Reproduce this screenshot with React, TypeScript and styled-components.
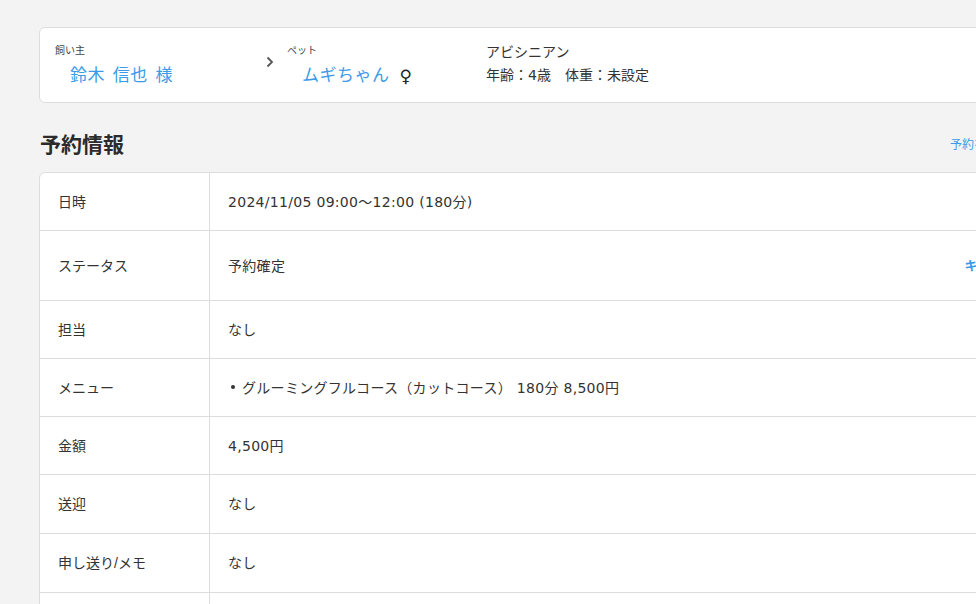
import React from "react";
import styled, { createGlobalStyle } from "styled-components";

const Blue = "#3b9be8";
const Line = "#dddddd";

const GlobalStyle = createGlobalStyle`
  html, body {
    margin: 0;
    padding: 0;
    background: #f3f3f3;
    overflow: hidden;
  }
  body {
    font-family: "Liberation Sans", "Noto Sans CJK JP", sans-serif;
    color: #333;
  }
`;

const Page = styled.div`
  width: 1011px;
  padding: 27px 0 0 39px;
`;

const HeaderCard = styled.div`
  display: flex;
  align-items: center;
  height: 76px;
  box-sizing: border-box;
  padding: 0 15px;
  background: #fff;
  border: 1px solid ${Line};
  border-radius: 6px;
`;

const PersonBlock = styled.div<{ $width: number }>`
  display: flex;
  flex-direction: column;
  width: ${(p) => p.$width}px;
  margin-top: 1px;
`;

const SmallLabel = styled.div`
  font-size: 10px;
  line-height: 14px;
  color: #444;
`;

const Name = styled.div`
  display: flex;
  align-items: center;
  gap: 10px;
  padding-left: 15px;
  margin-top: 6px;
  font-size: 17px;
  line-height: 24px;
  color: ${Blue};
  letter-spacing: 0.5px;
  word-spacing: 2.5px;
`;

const Gender = styled.span`
  color: #222;
  font-family: "DejaVu Sans", sans-serif;
  font-size: 17px;
`;

const Chevron = styled.div`
  display: flex;
  width: 10px;
  margin: 0 12px 6px 0;
  color: #555;
`;

const Profile = styled.div`
  display: flex;
  flex-direction: column;
  gap: 5px;
  font-family: "DejaVu Sans", "Noto Sans CJK JP", sans-serif;
  font-size: 14px;
  line-height: 18px;
  color: #333;
  margin-top: -4px;
`;

const SectionHead = styled.div`
  display: flex;
  align-items: center;
  justify-content: space-between;
  margin: 26px 0 15px 1px;
`;

const Title = styled.h2`
  margin: 0;
  font-size: 21px;
  line-height: 28px;
  font-weight: 700;
  color: #2b2b2b;
  font-family: "Noto Sans CJK JP", sans-serif;
`;

const HeadLink = styled.a`
  font-size: 12px;
  color: ${Blue};
  margin-right: 40px;
  text-decoration: none;
`;

const Table = styled.div`
  background: #fff;
  border: 1px solid ${Line};
  border-radius: 6px;
  overflow: hidden;
`;

const Row = styled.div<{ $height: number }>`
  display: grid;
  grid-template-columns: 170px 1fr;
  height: ${(p) => p.$height}px;
  border-bottom: 1px solid ${Line};
  box-sizing: border-box;
`;

const LabelCell = styled.div`
  display: flex;
  align-items: center;
  padding: 0 0 2px 18px;
  border-right: 1px solid ${Line};
  font-size: 14px;
  color: #333;
`;

const ValueCell = styled.div`
  display: flex;
  align-items: center;
  justify-content: space-between;
  padding: 0 18px 2px 18px;
  font-family: "DejaVu Sans", "Noto Sans CJK JP", sans-serif;
  font-size: 14px;
  letter-spacing: 0.3px;
  color: #333;
`;

const ActionLink = styled.a`
  font-family: "Noto Sans CJK JP", sans-serif;
  font-size: 13px;
  font-weight: 700;
  color: ${Blue};
  text-decoration: none;
`;

const MenuList = styled.ul`
  margin: 0;
  padding: 0;
  list-style: none;
`;

const MenuItem = styled.li`
  display: flex;
  align-items: center;
  &::before {
    content: "";
    width: 4px;
    height: 4px;
    border-radius: 50%;
    background: #333;
    margin: 0 7px 0 3px;
  }
`;

const rows = [
  { label: "日時", value: "2024/11/05 09:00〜12:00 (180分)", h: 58 },
  { label: "ステータス", value: "予約確定", h: 70, action: "キャンセル" },
  { label: "担当", value: "なし", h: 58 },
  { label: "メニュー", menu: ["グルーミングフルコース（カットコース） 180分 8,500円"], h: 58 },
  { label: "金額", value: "4,500円", h: 58 },
  { label: "送迎", value: "なし", h: 59 },
  { label: "申し送り/メモ", value: "なし", h: 59 },
  { label: "", value: "", h: 59 },
];

export default function App() {
  return (
    <>
      <GlobalStyle />
      <Page>
        <HeaderCard>
          <PersonBlock $width={210}>
            <SmallLabel>飼い主</SmallLabel>
            <Name>鈴木 信也 様</Name>
          </PersonBlock>
          <Chevron>
            <svg width="10" height="12" viewBox="0 0 10 12" fill="none">
              <path d="M2.5 1.5L7 6L2.5 10.5" stroke="currentColor" strokeWidth="1.8" />
            </svg>
          </Chevron>
          <PersonBlock $width={199}>
            <SmallLabel>ペット</SmallLabel>
            <Name>
              ムギちゃん<Gender>♀</Gender>
            </Name>
          </PersonBlock>
          <Profile>
            <div>アビシニアン</div>
            <div>年齢：4歳　体重：未設定</div>
          </Profile>
        </HeaderCard>

        <SectionHead>
          <Title>予約情報</Title>
          <HeadLink href="#">予約を編集</HeadLink>
        </SectionHead>

        <Table>
          {rows.map((r, i) => (
            <Row key={i} $height={r.h}>
              <LabelCell>{r.label}</LabelCell>
              <ValueCell>
                {r.menu ? (
                  <MenuList>
                    {r.menu.map((m) => (
                      <MenuItem key={m}>{m}</MenuItem>
                    ))}
                  </MenuList>
                ) : (
                  <span>{r.value}</span>
                )}
                {r.action && <ActionLink href="#">{r.action}</ActionLink>}
              </ValueCell>
            </Row>
          ))}
        </Table>
      </Page>
    </>
  );
}
